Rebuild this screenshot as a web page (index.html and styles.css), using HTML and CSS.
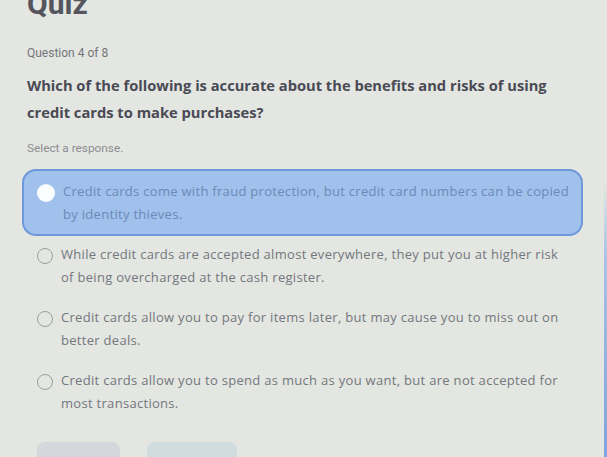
FILE: index.html
```html
<!DOCTYPE html>
<html lang="en">
<head>
<meta charset="utf-8">
<title>Quiz</title>
<link rel="stylesheet" href="styles.css">
</head>
<body>
<div class="screen">
  <div class="page">
    <h1 class="title">Quiz</h1>
    <div class="progress">Question 4 of 8</div>
    <p class="question">Which of the following is accurate about the benefits and risks of using credit cards to make purchases?</p>
    <div class="hint">Select a response.</div>
    <div class="options">
      <div class="option selected">
        <span class="radio"></span>
        <span class="label">Credit cards come with fraud protection, but credit card numbers can be copied by identity thieves.</span>
      </div>
      <div class="option">
        <span class="radio"></span>
        <span class="label">While credit cards are accepted almost everywhere, they put you at higher risk of being overcharged at the cash register.</span>
      </div>
      <div class="option">
        <span class="radio"></span>
        <span class="label">Credit cards allow you to pay for items later, but may cause you to miss out on better deals.</span>
      </div>
      <div class="option">
        <span class="radio"></span>
        <span class="label">Credit cards allow you to spend as much as you want, but are not accepted for most transactions.</span>
      </div>
    </div>
    <div class="actions">
      <span class="btn btn-back"></span>
      <span class="btn btn-next"></span>
    </div>
  </div>
  <div class="rail"></div>
</div>
</body>
</html>
```
FILE: styles.css
```css
html, body {
  margin: 0;
  padding: 0;
  height: 100%;
  overflow: hidden;
}
body {
  background: #e3e6e1;
  font-family: "Open Sans", Roboto, "Liberation Sans", sans-serif;
}
.screen {
  display: flex;
  height: 457px;
}
.page {
  flex: 1;
  padding: 0 21px 0 22px;
  overflow: hidden;
}
.rail {
  flex: none;
  width: 3px;
  background: linear-gradient(to bottom, #e3e6e1 0, #e3e6e1 185px, #a9c2e6 260px, #7fa3dc 457px);
}
.title {
  margin: -11px 0 0 5px;
  font-family: Roboto, "Liberation Sans", sans-serif;
  font-size: 30px;
  line-height: 30px;
  font-weight: 700;
  color: #54555d;
}
.progress {
  margin: 26px 0 0 5px;
  font-family: Roboto, "Liberation Sans", sans-serif;
  font-size: 12px;
  line-height: 16px;
  color: #73757b;
}
.question {
  margin: 11px 0 0 5px;
  font-size: 14.7px;
  line-height: 27px;
  font-weight: 700;
  color: #4a4a55;
}
.hint {
  margin: 14px 0 0 5px;
  font-family: Roboto, "Liberation Sans", sans-serif;
  font-size: 11.8px;
  line-height: 16px;
  color: #8b8d92;
}
.options {
  margin-top: 13px;
  display: flex;
  flex-direction: column;
}
.option {
  display: flex;
  align-items: flex-start;
  gap: 8px;
  padding: 6px 18px 10px 14px;
  border: 1px solid transparent;
  border-radius: 14px;
}
.option.selected {
  background: #9fc1eb;
  border: 2px solid #6f98db;
  padding: 9px 6px 9px 13px;
}
.radio {
  flex: none;
  width: 14px;
  height: 14px;
  margin-top: 5px;
  border: 1.5px solid #9c9ea3;
  border-radius: 50%;
}
.selected .radio {
  width: 18px;
  height: 18px;
  border: none;
  margin-top: 4px;
  background: #fbfcfd;
}
.label {
  font-size: 13px;
  letter-spacing: 0.3px;
  line-height: 22.5px;
  color: #74777e;
}
.selected .label {
  color: #6d89b7;
}
.actions {
  display: flex;
  gap: 27px;
  margin: 17px 0 0 15px;
}
.btn {
  display: block;
  height: 30px;
  border-radius: 8px;
}
.btn-back {
  width: 83px;
  background: #d6d7dd;
}
.btn-next {
  width: 90px;
  background: #d0dcde;
}
```
